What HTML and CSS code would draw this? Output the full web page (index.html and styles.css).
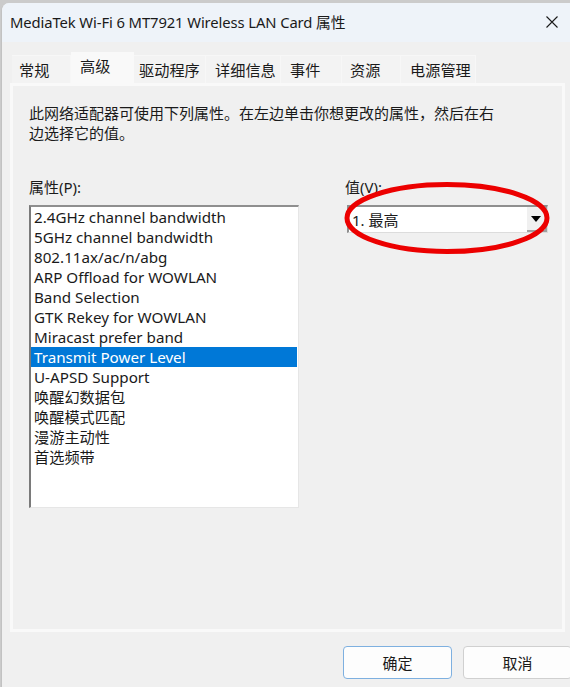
FILE: index.html
```html
<!DOCTYPE html>
<html lang="zh-CN">
<head>
<meta charset="utf-8">
<title>MediaTek Wi-Fi 6 MT7921 Wireless LAN Card 属性</title>
<link rel="stylesheet" href="styles.css">
</head>
<body>
<div class="window">
  <div class="titlebar">
    <span class="title">MediaTek Wi-Fi 6 MT7921 Wireless LAN Card 属性</span>
    <svg class="close" width="12" height="12" viewBox="0 0 12 12"><path d="M0.5 0.5 L11.5 11.5 M11.5 0.5 L0.5 11.5" stroke="#1a1a1a" stroke-width="1.1" fill="none"/></svg>
  </div>
  <div class="body">
    <div class="tabs">
      <div class="tab t1">常规</div>
      <div class="tab t2 active">高级</div>
      <div class="tab t3">驱动程序</div>
      <div class="tab t4">详细信息</div>
      <div class="tab t5">事件</div>
      <div class="tab t6">资源</div>
      <div class="tab t7">电源管理</div>
    </div>
    <div class="panel">
      <p class="desc">此网络适配器可使用下列属性。在左边单击你想更改的属性，然后在右<br>边选择它的值。</p>
      <div class="columns">
        <div class="col-left">
          <div class="label">属性(P):</div>
          <ul class="listbox">
            <li>2.4GHz channel bandwidth</li>
            <li>5GHz channel bandwidth</li>
            <li>802.11ax/ac/n/abg</li>
            <li>ARP Offload for WOWLAN</li>
            <li>Band Selection</li>
            <li>GTK Rekey for WOWLAN</li>
            <li>Miracast prefer band</li>
            <li class="selected">Transmit Power Level</li>
            <li>U-APSD Support</li>
            <li>唤醒幻数据包</li>
            <li>唤醒模式匹配</li>
            <li>漫游主动性</li>
            <li>首选频带</li>
          </ul>
        </div>
        <div class="col-right">
          <div class="label">值(V):</div>
          <div class="combo">
            <span class="combo-text">1. 最高</span>
            <span class="combo-btn"><svg width="10" height="6" viewBox="0 0 10 6"><path d="M0 0 H10 L5 6 Z" fill="#000"/></svg></span>
          </div>
          <svg class="mark" width="214" height="80" viewBox="0 0 214 80"><ellipse cx="106" cy="38" rx="100" ry="33.5" fill="none" stroke="#ec0000" stroke-width="5"/></svg>
        </div>
      </div>
    </div>
    <div class="buttons">
      <button class="btn default">确定</button>
      <button class="btn">取消</button>
    </div>
  </div>
</div>
</body>
</html>
```
FILE: styles.css
```css
html, body {
  margin: 0;
  padding: 0;
}
body {
  width: 570px;
  height: 687px;
  overflow: hidden;
  background: #cbcbcb;
  font-family: "Noto Sans", "Noto Sans CJK SC", sans-serif;
  color: #000;
}
.window {
  margin: 3px 0 0 1px;
  height: 684px;
  width: 575px;
  background: #f0f0f0;
  border-left: 1px solid #c2c2c2;
  border-top-left-radius: 8px;
  overflow: hidden;
}
.titlebar {
  height: 39px;
  background: #eef3f9;
  display: flex;
  align-items: center;
  justify-content: space-between;
  padding: 0 0 0 8px;
  box-sizing: border-box;
}
.title {
  font-size: 14.8px;
  color: #1a1a1a;
  letter-spacing: -0.1px;
  margin-top: -2px;
}
.close {
  margin-right: 19px;
  margin-top: -2px;
}
.body {
  padding: 10px 0 0 8px;
}
.tabs {
  display: flex;
  align-items: flex-end;
  height: 31px;
  margin-left: 2px;
  position: relative;
  z-index: 1;
}
.tab {
  height: 28px;
  box-sizing: border-box;
  padding: 0 0 0 7px;
  font-family: "Noto Sans CJK SC", sans-serif;
  font-size: 15.2px;
  line-height: 27px;
  background: #f3f3f3;
  border-top: 1px solid #f7f7f7;
  border-right: 1px solid #f7f7f7;
  color: #1a1a1a;
}
.tab.active {
  height: 32px;
  margin-bottom: -1px;
  background: #f9f9f9;
  border: none;
  line-height: 27px;
  padding-left: 9px;
}
.t1 { width: 59px; }
.t2 { width: 63px; }
.t3 { width: 72px; padding-left: 5px; }
.t4 { width: 75px; padding-left: 9px; }
.t5 { width: 61px; padding-left: 9px; }
.t6 { width: 59px; padding-left: 8px; }
.t7 { width: 75px; padding-left: 9px; }
.panel {
  width: 555px;
  height: 549px;
  box-sizing: border-box;
  border: 3px solid #f9f9f9;
  padding: 17px 0 0 16px;
}
.desc {
  margin: 0;
  font-size: 15px;
  line-height: 20px;
  color: #1a1a1a;
}
.columns {
  display: flex;
  margin-top: 34px;
}
.col-left {
  width: 270px;
}
.col-right {
  margin-left: 46px;
  position: relative;
}
.label {
  font-size: 15px;
  line-height: 20px;
  height: 20px;
  margin-bottom: 8px;
  color: #1a1a1a;
}
.listbox {
  list-style: none;
  margin: 0;
  padding: 0;
  width: 270px;
  height: 303px;
  box-sizing: border-box;
  background: #fff;
  border-top: 2px solid #8f8f8f;
  border-left: 2px solid #7a7a7a;
  border-right: 1px solid #e6e6e6;
  border-bottom: 1px solid #e6e6e6;
}
.listbox li {
  height: 20px;
  line-height: 20px;
  padding-left: 3px;
  font-size: 15.2px;
  color: #1a1a1a;
  white-space: nowrap;
}
.listbox li.selected {
  background: #0078d7;
  color: #fff;
  margin-right: 1px;
}
.combo {
  margin-left: 2px;
  width: 201px;
  height: 28px;
  box-sizing: border-box;
  background: #fff;
  border-top: 2px solid #8f8f8f;
  border-left: 2px solid #8f8f8f;
  border-right: 1px solid #dcdcdc;
  border-bottom: 1px solid #dcdcdc;
  display: flex;
  align-items: center;
  justify-content: space-between;
}
.combo-text {
  font-size: 15px;
  padding-left: 3px;
  color: #1a1a1a;
}
.combo-btn {
  width: 20px;
  height: 25px;
  box-sizing: border-box;
  background: #f0f0f0;
  border-right: 2px solid #a0a0a0;
  border-bottom: 2px solid #a0a0a0;
  display: flex;
  align-items: center;
  justify-content: center;
}
.mark {
  position: absolute;
  left: -4px;
  top: 3px;
}
.buttons {
  display: flex;
  gap: 11px;
  padding: 14px 0 0 333px;
}
.btn {
  width: 109px;
  height: 33px;
  flex-shrink: 0;
  background: #fdfdfd;
  border: 1px solid #d0d0d0;
  border-radius: 4px;
  font-family: "Noto Sans CJK SC", "Noto Sans", sans-serif;
  font-size: 15px;
  color: #1a1a1a;
  padding: 0;
}
.btn.default {
  border: 1.5px solid #7eb0e0;
}
```
